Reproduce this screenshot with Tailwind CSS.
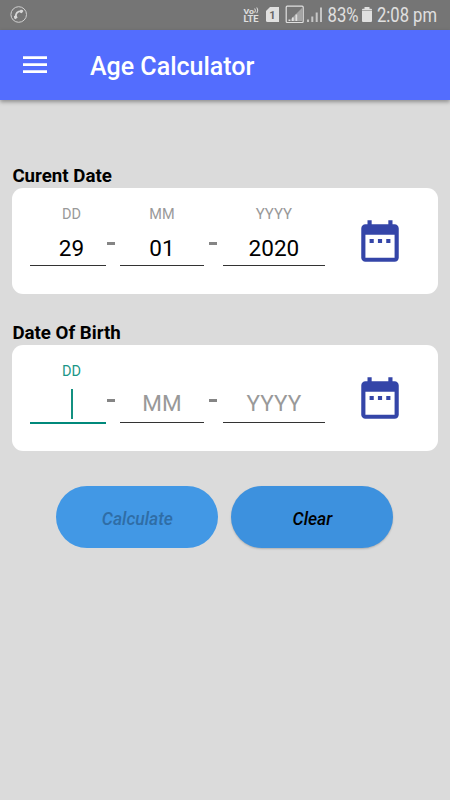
<!DOCTYPE html>
<html lang="en">
<head>
<meta charset="utf-8">
<title>Age Calculator</title>
<script src="https://cdn.jsdelivr.net/npm/@tailwindcss/browser@4"></script>
</head>
<body class="w-[450px] h-[800px] overflow-hidden bg-[#dbdbdb] font-[Roboto,sans-serif] text-black flex flex-col">
<svg class="hidden">
  <symbol id="calendar" viewBox="0 0 24 24">
    <path fill="#3445a8" d="M9 11H7v2h2v-2zm4 0h-2v2h2v-2zm4 0h-2v2h2v-2zm2-7h-1V2h-2v2H8V2H6v2H5c-1.11 0-1.99.9-1.99 2L3 20a2 2 0 0 0 2 2h14c1.1 0 2-.9 2-2V6c0-1.100-.9-2-2-2zm0 16H5V9h14v11z"/>
  </symbol>
</svg>

<!-- Status bar -->
<div class="h-[30px] shrink-0 bg-[#757575]">
  <svg class="block" width="450" height="30" viewBox="0 0 450 30" font-family="Roboto, sans-serif" fill="#e0e0e0">
    <circle cx="18.700" cy="14.500" r="7.800" fill="none" stroke="#d0d0d0" stroke-width="1"/>
    <path d="M15.600 17.200C15.600 13.500 17.500 11.300 21.300 11.200" fill="none" stroke="#d8d8d8" stroke-width="1.700"/>
    <path d="M14 15.900l2.600-.6 1 2.500-2.400 1.500c-1-.7-1.300-2-1.200-3.400zM20.300 10c1.300-.3 2.500-.1 3.100.9l-1.600 2.400-2-.9z" fill="#d8d8d8"/>
    <text x="243.500" y="13.500" font-size="8" font-weight="700" textLength="10.500" lengthAdjust="spacingAndGlyphs">Vo</text>
    <path d="M254.700 8.500q1.400 1.600 0 4.200M256.800 7.500q2 2.300 0 5.700" fill="none" stroke="#e0e0e0" stroke-width="1"/>
    <text x="243.500" y="22" font-size="8.500" font-weight="700" textLength="15" lengthAdjust="spacingAndGlyphs">LTE</text>
    <path d="M270 7h9v15h-11.500q-1.500 0-1.500-1.500V11z"/>
    <text x="269.300" y="18.700" font-size="11" font-weight="700" fill="#686868">1</text>
    <rect x="286.200" y="6.200" width="17" height="16.300" rx="1" fill="none" stroke="#e0e0e0" stroke-width="1.200"/>
    <path d="M302 8v13h-13z" fill="#a4a4a4"/>
    <path d="M288.500 19.500h1.500v1.500h-1.500zM292 17.500h1.700v3.500H292zM295.500 14.500h1.700v6.500h-1.700z"/>
    <path d="M307 19.500h2v2.500h-2zM311.300 16.500h2V22h-2zM315.700 12.500h2V22h-2zM320 7.500h2V22h-2z" fill="#c6c6c6"/>
    <text x="327.500" y="21.500" font-size="19.500" textLength="31" lengthAdjust="spacingAndGlyphs">83%</text>
    <path d="M364.500 7h5v1.800h1.500q1 0 1 1V21q0 1-1 1h-8q-1 0-1-1V9.800q0-1 1-1h1.500z"/>
    <path d="M362 10.500h10" stroke="#a8a8a8" stroke-width="1"/>
    <text x="377" y="21.500" font-size="19.500" textLength="60" lengthAdjust="spacingAndGlyphs">2:08 pm</text>
  </svg>
</div>

<!-- App bar -->
<header class="h-[70px] shrink-0 bg-[#536dfe] flex items-center pl-[23px] shadow-[0_2px_4px_rgba(0,0,0,0.35)]">
  <svg class="block w-[24px] h-[18px]" viewBox="0 0 24 18" fill="#fff"><path d="M0 0.300h24v2.700H0zM0 7.300h24v2.700H0zM0 14.300h24v2.700H0z"/></svg>
  <h1 class="ml-[43px] mt-[3px] text-[25px] leading-[30px] font-medium text-white whitespace-nowrap">Age Calculator</h1>
</header>

<main class="px-[12.400px] pt-[66px]">
  <h2 class="h-[22px] text-[18.700px] leading-[20px] font-bold whitespace-nowrap">Curent Date</h2>
  <section class="h-[106.300px] bg-white rounded-[11px] flex pl-[17.500px]">
    <div class="w-[76px] h-[78px] border-b border-[#333] flex flex-col items-center pl-[7px]">
      <span class="mt-[18px] text-[14.500px] leading-[17px] text-[#999]">DD</span>
      <span class="mt-[12px] text-[22.500px] leading-[27px]">29</span>
    </div>
    <div class="w-[14px] pt-[54px] pl-[1px]"><div class="w-[8px] h-[3px] bg-[#858585]"></div></div>
    <div class="w-[84px] h-[78px] border-b border-[#333] flex flex-col items-center">
      <span class="mt-[18px] text-[14.500px] leading-[17px] text-[#999]">MM</span>
      <span class="mt-[12px] text-[22.500px] leading-[27px]">01</span>
    </div>
    <div class="w-[19px] pt-[54px] pl-[5px]"><div class="w-[8px] h-[3px] bg-[#858585]"></div></div>
    <div class="w-[102px] h-[78px] border-b border-[#333] flex flex-col items-center">
      <span class="mt-[18px] text-[15px] leading-[17px] text-[#999]">YYYY</span>
      <span class="mt-[12px] text-[22.500px] leading-[27px]">2020</span>
    </div>
    <svg class="ml-[30px] mt-[28px] w-[50px] h-[50px]"><use href="#calendar"/></svg>
  </section>

  <h2 class="mt-[28.700px] h-[22px] text-[18.700px] leading-[20px] font-bold whitespace-nowrap">Date Of Birth</h2>
  <section class="h-[106.300px] bg-white rounded-[11px] flex pl-[17.500px]">
    <div class="w-[76px] h-[79px] border-b-2 border-[#00897b] flex flex-col items-center pl-[7px]">
      <span class="mt-[18px] text-[14.500px] leading-[17px] text-[#1a9687]">DD</span>
      <span class="mt-[9px] ml-[2px] w-[2px] h-[30px] bg-[#139080]"></span>
    </div>
    <div class="w-[14px] pt-[54px] pl-[1px]"><div class="w-[8px] h-[3px] bg-[#858585]"></div></div>
    <div class="w-[84px] h-[78px] border-b border-[#333] flex flex-col items-center">
      <span class="mt-[45px] text-[22.500px] leading-[27px] text-[#999]">MM</span>
    </div>
    <div class="w-[19px] pt-[54px] pl-[5px]"><div class="w-[8px] h-[3px] bg-[#858585]"></div></div>
    <div class="w-[102px] h-[78px] border-b border-[#333] flex flex-col items-center">
      <span class="mt-[45px] text-[22.500px] leading-[27px] text-[#999]">YYYY</span>
    </div>
    <svg class="ml-[30px] mt-[28px] w-[50px] h-[50px]"><use href="#calendar"/></svg>
  </section>

  <div class="mt-[35px] pl-[44px] flex gap-[13px]">
    <button class="w-[162px] h-[62px] rounded-full bg-[#4298e5] text-[#2f6da6] text-[17.500px] font-medium italic pt-[3px]">Calculate</button>
    <button class="w-[162px] h-[62px] rounded-full bg-[#3d91de] text-black text-[17.500px] font-medium italic pt-[3px] shadow-[0_1px_2px_rgba(0,0,0,0.2)]">Clear</button>
  </div>
</main>
</body>
</html>
